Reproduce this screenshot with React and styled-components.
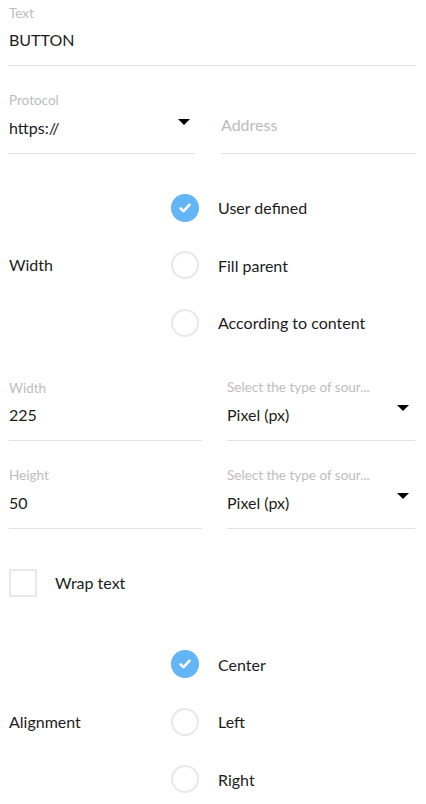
import React, { useState } from 'react'
import styled, { createGlobalStyle } from 'styled-components'

const GlobalStyle = createGlobalStyle`
    body {
        margin: 0;
        background: #ffffff;
        font-family: Lato, "Noto Sans", sans-serif;
        color: #1f1f1f;
    }
`

const Page = styled.div`
    width: 406px;
    padding: 5px 11px 0 9px;
    display: flex;
    flex-direction: column;
`

const FieldRow = styled.div`
    display: flex;
    align-items: flex-end;
    gap: ${props => props.gap || 25}px;
    margin-top: ${props => props.top || 0}px;
`

const Field = styled.div`
    width: ${props => props.w ? props.w + 'px' : '100%'};
    flex: ${props => props.w ? 'none' : 1};
    display: flex;
    flex-direction: column;
    border-bottom: 1px solid #e2e2e2;
    padding-bottom: ${props => props.pb || 13}px;
    position: relative;
`

const Label = styled.div`
    font-size: 13.5px;
    line-height: 16px;
    height: 16px;
    color: #bdbdbd;
    white-space: nowrap;
    overflow: hidden;
    text-overflow: ellipsis;
`

const Value = styled.div`
    margin-top: ${props => props.gap || 7}px;
    font-size: 16px;
    line-height: 24px;
    height: 24px;
    color: ${props => props.placeholder ? '#bcbcbc' : '#1c1c1c'};
`

const Caret = styled.span`
    position: absolute;
    right: ${props => props.right || 5}px;
    top: ${props => props.top}px;
    width: 0;
    height: 0;
    border-left: 6px solid transparent;
    border-right: 6px solid transparent;
    border-top: 6px solid #000;
`

const Group = styled.div`
    display: flex;
    align-items: center;
    margin-top: ${props => props.top}px;
`

const GroupLabel = styled.div`
    width: 162px;
    font-size: 16px;
    line-height: 24px;
    color: #1c1c1c;
`

const Options = styled.div`
    display: flex;
    flex-direction: column;
`

const Option = styled.div`
    height: 57.5px;
    display: flex;
    align-items: center;
    gap: 19px;
    font-size: 16px;
    color: #1c1c1c;
    cursor: pointer;
`

const Circle = styled.span`
    width: 28px;
    height: 28px;
    box-sizing: border-box;
    border-radius: 50%;
    display: flex;
    align-items: center;
    justify-content: center;
    background: ${props => props.on ? '#64b5f6' : '#fff'};
    border: ${props => props.on ? 'none' : '2px solid #e8e8e8'};
`

const CheckRow = styled.div`
    display: flex;
    align-items: center;
    gap: 18px;
    margin-top: 40px;
    font-size: 16px;
    color: #1c1c1c;
`

const Box = styled.span`
    width: 28px;
    height: 28px;
    box-sizing: border-box;
    border: 2px solid #e8e8e8;
`

const Tick = () => (
    <svg width="14" height="14" viewBox="0 0 14 14">
        <path d="M2.6 7.4 L5.6 10.2 L11.4 3.8" fill="none" stroke="#fff" strokeWidth="2.6" strokeLinecap="round" strokeLinejoin="round" />
    </svg>
)

const RadioGroup = ({ label, items, value, onChange, top }) => (
    <Group top={top}>
        <GroupLabel>{label}</GroupLabel>
        <Options>
            {items.map(item => (
                <Option key={item} onClick={() => onChange(item)}>
                    <Circle on={value === item}>{value === item && <Tick />}</Circle>
                    {item}
                </Option>
            ))}
        </Options>
    </Group>
)

const App = () => {
    const [widthMode, setWidthMode] = useState('User defined')
    const [align, setAlign] = useState('Center')

    return (
        <Page>
            <GlobalStyle />
            <Field>
                <Label>Text</Label>
                <Value>BUTTON</Value>
            </Field>

            <FieldRow top={26} gap={26}>
                <Field w={186}>
                    <Label>Protocol</Label>
                    <Value gap={8}>https://</Value>
                    <Caret top={27} right={5} />
                </Field>
                <Field pb={16}>
                    <Value placeholder>Address</Value>
                </Field>
            </FieldRow>

            <RadioGroup
                top={25}
                label="Width"
                items={['User defined', 'Fill parent', 'According to content']}
                value={widthMode}
                onChange={setWidthMode}
            />

            <FieldRow top={27}>
                <Field w={193}>
                    <Label>Width</Label>
                    <Value>225</Value>
                </Field>
                <Field>
                    <Label>Select the type of sour...</Label>
                    <Value gap={8}>Pixel (px)</Value>
                    <Caret top={26} right={6} />
                </Field>
            </FieldRow>

            <FieldRow top={26}>
                <Field w={193}>
                    <Label>Height</Label>
                    <Value gap={8}>50</Value>
                </Field>
                <Field>
                    <Label>Select the type of sour...</Label>
                    <Value gap={8}>Pixel (px)</Value>
                    <Caret top={26} right={6} />
                </Field>
            </FieldRow>

            <CheckRow>
                <Box />
                Wrap text
            </CheckRow>

            <RadioGroup
                top={39}
                label="Alignment"
                items={['Center', 'Left', 'Right']}
                value={align}
                onChange={setAlign}
            />
        </Page>
    )
}

export default App
